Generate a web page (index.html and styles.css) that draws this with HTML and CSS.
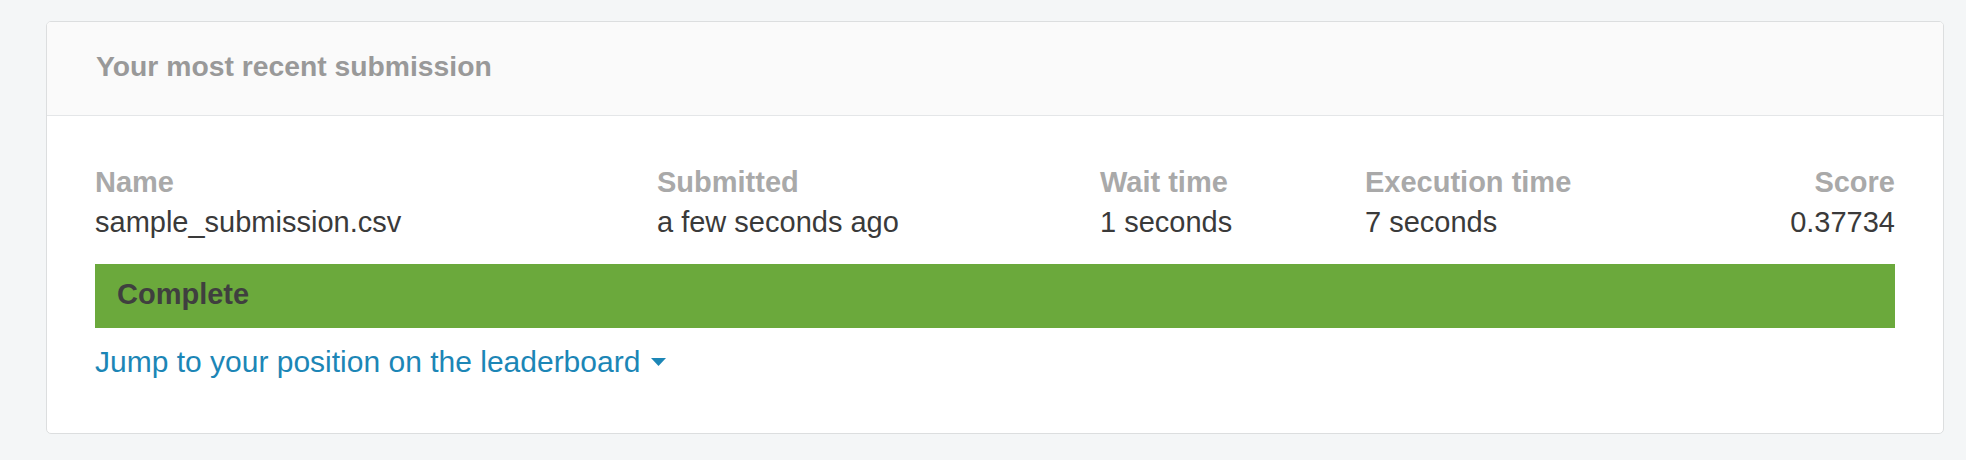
FILE: index.html
```html
<!DOCTYPE html>
<html lang="en">
<head>
<meta charset="utf-8">
<title>Your most recent submission</title>
<link rel="stylesheet" href="styles.css">
</head>
<body>
<section class="card">
  <header class="card-header">
    <h2 class="card-title">Your most recent submission</h2>
  </header>
  <div class="card-body">
    <div class="summary">
      <div class="col">
        <div class="label">Name</div>
        <div class="value">sample_submission.csv</div>
      </div>
      <div class="col">
        <div class="label">Submitted</div>
        <div class="value">a few seconds ago</div>
      </div>
      <div class="col">
        <div class="label">Wait time</div>
        <div class="value">1 seconds</div>
      </div>
      <div class="col">
        <div class="label">Execution time</div>
        <div class="value">7 seconds</div>
      </div>
      <div class="col col-right">
        <div class="label">Score</div>
        <div class="value">0.37734</div>
      </div>
    </div>
    <div class="status">Complete</div>
    <a class="jump" href="#">Jump to your position on the leaderboard<svg class="caret" width="15" height="8" viewBox="0 0 15 8"><path d="M0 0 H15 L7.5 8 Z" fill="#1c86b6"/></svg></a>
  </div>
</section>
</body>
</html>
```
FILE: styles.css
```css
html, body {
  margin: 0;
  padding: 0;
}

body {
  background: #f4f6f7;
  padding: 21px 22px 0 46px;
  font-family: "Liberation Sans", Arial, sans-serif;
  color: #3c3c3c;
}

.card {
  background: #ffffff;
  border: 1px solid #dcdedf;
  border-radius: 5px;
  overflow: hidden;
}

.card-header {
  background: #fafafa;
  border-bottom: 1px solid #e4e6e8;
  height: 94px;
  box-sizing: border-box;
  padding: 0 48px 4px 49px;
}

.card-title {
  margin: 0;
  font-size: 28.3px;
  font-weight: bold;
  line-height: 89px;
  color: #999999;
}

.card-body {
  padding: 46px 48px 51px 48px;
}

.summary {
  display: grid;
  grid-template-columns: 562px 443px 265px auto 1fr;
  font-size: 29px;
  line-height: 40px;
}

.summary .col-right {
  text-align: right;
}

.label {
  font-weight: bold;
  color: #a9a9a9;
}

.value {
  color: #3a3a3a;
}

.status {
  margin-top: 22px;
  height: 64px;
  box-sizing: border-box;
  background: #6ba93c;
  padding: 0 22px 4px 22px;
  font-size: 29px;
  line-height: 60px;
  font-weight: bold;
  color: #3f3f3f;
}

.jump {
  display: inline-block;
  margin-top: 14px;
  font-size: 30px;
  line-height: 40px;
  color: #1c86b6;
  text-decoration: none;
}

.caret {
  margin-left: 11px;
  vertical-align: 6px;
}
```
